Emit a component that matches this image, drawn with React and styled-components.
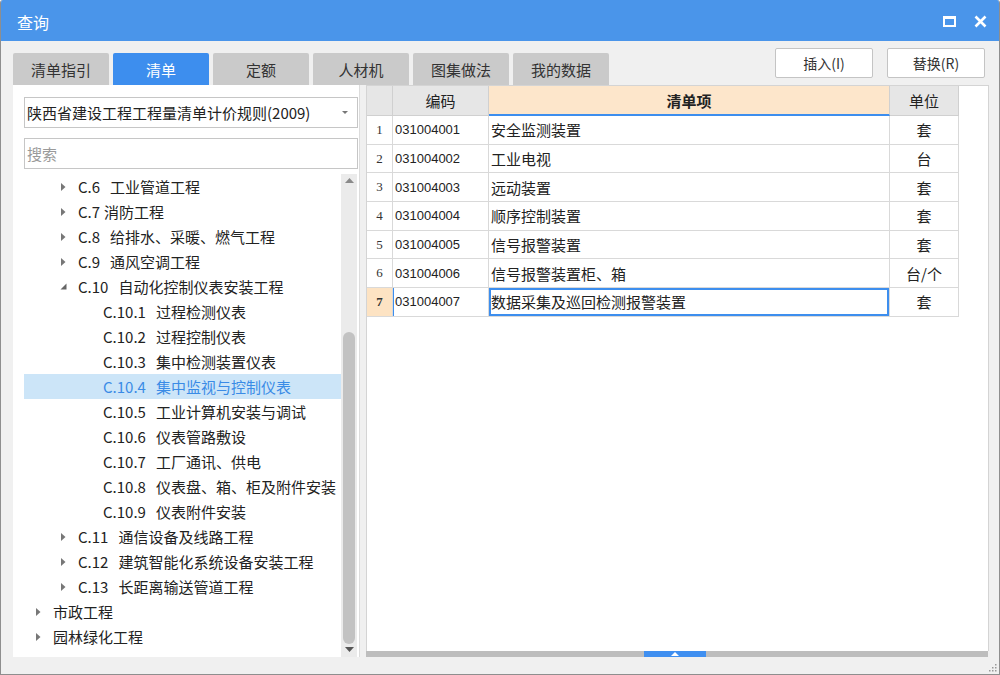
import React from "react";
import styled, { createGlobalStyle } from "styled-components";

const FONT = '"Noto Sans CJK SC", "Noto Sans", "Liberation Sans", sans-serif';
const BLUE = "#3d8eee";
const GRID = "#d9d9d9";

const GlobalStyle = createGlobalStyle`
  html, body {
    margin: 0;
    padding: 0;
    background: #ffffff;
  }
  body {
    font-family: ${FONT};
  }
  * {
    box-sizing: border-box;
  }
`;

const TABS = ["清单指引", "清单", "定额", "人材机", "图集做法", "我的数据"];

const TREE = [
  { level: 2, arrow: "right", code: "C.6", name: "工业管道工程" },
  { level: 2, arrow: "right", code: "C.7", name: "消防工程", tight: true },
  { level: 2, arrow: "right", code: "C.8", name: "给排水、采暖、燃气工程" },
  { level: 2, arrow: "right", code: "C.9", name: "通风空调工程" },
  { level: 2, arrow: "down", code: "C.10", name: "自动化控制仪表安装工程" },
  { level: 3, code: "C.10.1", name: "过程检测仪表" },
  { level: 3, code: "C.10.2", name: "过程控制仪表" },
  { level: 3, code: "C.10.3", name: "集中检测装置仪表" },
  { level: 3, code: "C.10.4", name: "集中监视与控制仪表", selected: true },
  { level: 3, code: "C.10.5", name: "工业计算机安装与调试" },
  { level: 3, code: "C.10.6", name: "仪表管路敷设" },
  { level: 3, code: "C.10.7", name: "工厂通讯、供电" },
  { level: 3, code: "C.10.8", name: "仪表盘、箱、柜及附件安装" },
  { level: 3, code: "C.10.9", name: "仪表附件安装" },
  { level: 2, arrow: "right", code: "C.11", name: "通信设备及线路工程" },
  { level: 2, arrow: "right", code: "C.12", name: "建筑智能化系统设备安装工程" },
  { level: 2, arrow: "right", code: "C.13", name: "长距离输送管道工程" },
  { level: 1, arrow: "right", name: "市政工程" },
  { level: 1, arrow: "right", name: "园林绿化工程" },
];

const ROWS = [
  ["031004001", "安全监测装置", "套"],
  ["031004002", "工业电视", "台"],
  ["031004003", "远动装置", "套"],
  ["031004004", "顺序控制装置", "套"],
  ["031004005", "信号报警装置", "套"],
  ["031004006", "信号报警装置柜、箱", "台/个"],
  ["031004007", "数据采集及巡回检测报警装置", "套"],
];

const App = () => {
  return (
    <>
      <GlobalStyle />
      <Window>
        <TitleBar>
          <Title>查询</Title>
          <WinControls>
            <svg width="13" height="11" viewBox="0 0 13 11">
              <rect x="1" y="1.5" width="11" height="8.5" fill="none" stroke="#fff" strokeWidth="2" />
              <rect x="0" y="0" width="13" height="3" fill="#fff" />
            </svg>
            <svg width="13" height="13" viewBox="0 0 13 13">
              <path d="M1.5 1.5 L11.5 11.5 M11.5 1.5 L1.5 11.5" stroke="#fff" strokeWidth="2.6" />
            </svg>
          </WinControls>
        </TitleBar>
        <Body>
          <TopRow>
            <Tabs>
              {TABS.map((t, i) => (
                <Tab key={t} $active={i === 1}>{t}</Tab>
              ))}
            </Tabs>
            <Actions>
              <ActionButton>插入(I)</ActionButton>
              <ActionButton>替换(R)</ActionButton>
            </Actions>
          </TopRow>
          <Main>
            <LeftPanel>
              <Combo>
                <span>陕西省建设工程工程量清单计价规则(2009)</span>
                <ComboArrow />
              </Combo>
              <Search>搜索</Search>
              <TreeArea>
                <TreeList>
                  {TREE.map((n, i) => (
                    <TreeRow key={i} $level={n.level} $selected={n.selected}>
                      {n.arrow === "right" && (
                        <ArrowBox>
                          <svg width="5" height="8" viewBox="0 0 5 8">
                            <path d="M0 0 L4.5 4 L0 8 Z" fill="#777" />
                          </svg>
                        </ArrowBox>
                      )}
                      {n.arrow === "down" && (
                        <ArrowBox>
                          <svg width="7" height="7" viewBox="0 0 7 7">
                            <path d="M6.5 0.5 L6.5 6.5 L0.5 6.5 Z" fill="#666" />
                          </svg>
                        </ArrowBox>
                      )}
                      {n.code && <Code $tight={n.tight}>{n.code}</Code>}
                      <span>{n.name}</span>
                    </TreeRow>
                  ))}
                </TreeList>
                <VScroll>
                  <svg width="9" height="5" viewBox="0 0 9 5">
                    <path d="M0 5 L4.5 0 L9 5 Z" fill="#8a8a8a" />
                  </svg>
                  <Thumb />
                  <svg width="9" height="5" viewBox="0 0 9 5">
                    <path d="M0 0 L4.5 5 L9 0 Z" fill="#555" />
                  </svg>
                </VScroll>
              </TreeArea>
            </LeftPanel>
            <RightColumn>
              <RightPanel>
                <Grid>
                  <HeadCell />
                  <HeadCell>编码</HeadCell>
                  <HeadCell $focus>清单项</HeadCell>
                  <HeadCell>单位</HeadCell>
                  {ROWS.map((r, i) => {
                    const sel = i === ROWS.length - 1;
                    return (
                      <React.Fragment key={r[0]}>
                        <NumCell $selected={sel}>{i + 1}</NumCell>
                        <CodeCell $selected={sel}>{r[0]}</CodeCell>
                        <NameCell $selected={sel}>{r[1]}</NameCell>
                        <UnitCell>{r[2]}</UnitCell>
                      </React.Fragment>
                    );
                  })}
                </Grid>
              </RightPanel>
              <Splitter>
                <SplitHandle>
                  <svg width="8" height="4" viewBox="0 0 8 4">
                    <path d="M0 4 L4 0 L8 4 Z" fill="#fff" />
                  </svg>
                </SplitHandle>
              </Splitter>
            </RightColumn>
          </Main>
        </Body>
        <Grip>
          <svg width="9" height="9" viewBox="0 0 9 9">
            <rect x="7" y="1" width="1.5" height="1.5" fill="#999" />
            <rect x="4" y="4" width="1.5" height="1.5" fill="#999" />
            <rect x="7" y="4" width="1.5" height="1.5" fill="#999" />
            <rect x="1" y="7" width="1.5" height="1.5" fill="#999" />
            <rect x="4" y="7" width="1.5" height="1.5" fill="#999" />
            <rect x="7" y="7" width="1.5" height="1.5" fill="#999" />
          </svg>
        </Grip>
      </Window>
    </>
  );
};
export default App;

const Window = styled.div`
  position: relative;
  width: 1000px;
  height: 675px;
  display: flex;
  flex-direction: column;
  background: #f0f0f0;
  border: 1px solid #8e8e8e;
  border-top: none;
  border-radius: 3px 3px 0 0;
  overflow: hidden;
`;

const TitleBar = styled.div`
  height: 41px;
  flex: none;
  display: flex;
  align-items: center;
  justify-content: space-between;
  background: #4a95ea;
  padding: 0 12px 0 16px;
`;

const Title = styled.div`
  color: #fff;
  font-size: 16px;
  padding-top: 2px;
`;

const WinControls = styled.div`
  display: flex;
  align-items: center;
  gap: 18px;
  padding-top: 1px;
`;

const Body = styled.div`
  flex: 1;
  display: flex;
  flex-direction: column;
  padding: 8px 10px 17px 12px;
`;

const TopRow = styled.div`
  height: 36px;
  flex: none;
  display: flex;
  justify-content: space-between;
`;

const Tabs = styled.div`
  display: flex;
  align-items: flex-end;
  gap: 4px;
`;

const Tab = styled.div`
  width: 96px;
  height: 32px;
  display: flex;
  align-items: center;
  justify-content: center;
  border-radius: 2px 2px 0 0;
  font-size: 15px;
  background: ${(p) => (p.$active ? BLUE : "#cacaca")};
  color: ${(p) => (p.$active ? "#fff" : "#333")};
`;

const Actions = styled.div`
  display: flex;
  gap: 14px;
  margin-right: 4px;
  margin-top: -1px;
`;

const ActionButton = styled.button`
  width: 98px;
  height: 30px;
  background: #fff;
  border: 1px solid #c4c4c4;
  border-radius: 2px;
  font-family: ${FONT};
  font-size: 14px;
  color: #333;
  padding: 0;
`;

const Main = styled.div`
  flex: 1;
  display: flex;
  gap: 6px;
  min-height: 0;
`;

const LeftPanel = styled.div`
  width: 347px;
  flex: none;
  display: flex;
  flex-direction: column;
  background: #fff;
  border-right: 1px solid #dcdcdc;
  padding: 12px 2px 0 11px;
`;

const Combo = styled.div`
  height: 31px;
  display: flex;
  align-items: center;
  justify-content: space-between;
  border: 1px solid #c6c6c6;
  padding: 0 9px 0 2px;
  font-size: 15px;
  color: #222;
  width: 334px;
`;

const ComboArrow = styled.div`
  width: 0;
  height: 0;
  border-left: 3px solid transparent;
  border-right: 3px solid transparent;
  border-top: 3px solid #777;
`;

const Search = styled.div`
  height: 31px;
  margin-top: 10px;
  display: flex;
  align-items: center;
  border: 1px solid #c6c6c6;
  padding-left: 2px;
  font-size: 15px;
  color: #9a9a9a;
  width: 334px;
`;

const TreeArea = styled.div`
  flex: 1;
  display: flex;
  margin-top: 5px;
  min-height: 0;
`;

const TreeList = styled.div`
  width: 317px;
  display: flex;
  flex-direction: column;
`;

const TreeRow = styled.div`
  position: relative;
  height: 25px;
  flex: none;
  display: flex;
  align-items: center;
  padding-left: ${(p) => (p.$level - 1) * 25 + 29}px;
  font-size: 15px;
  white-space: nowrap;
  color: ${(p) => (p.$selected ? "#3a8be6" : "#222")};
  background: ${(p) => (p.$selected ? "#cce5f8" : "transparent")};
`;

const ArrowBox = styled.span`
  width: 10px;
  margin-left: -20px;
  margin-right: 10px;
  display: flex;
  align-items: center;
  justify-content: center;
`;

const Code = styled.span`
  margin-right: ${(p) => (p.$tight ? 4 : 10)}px;
`;

const VScroll = styled.div`
  width: 16px;
  display: flex;
  flex-direction: column;
  align-items: center;
  background: #ebebeb;
  padding: 4px 0 5px;
`;

const Thumb = styled.div`
  width: 12px;
  margin-top: auto;
  margin-bottom: 3px;
  height: 312px;
  background: #c2c2c2;
  border-radius: 6px;
`;

const RightColumn = styled.div`
  flex: 1;
  display: flex;
  flex-direction: column;
`;

const RightPanel = styled.div`
  flex: 1;
  background: #fff;
  border: 1px solid #d4d4d4;
  border-bottom: none;
`;

const Grid = styled.div`
  display: grid;
  grid-template-columns: 26px 96px 401px 69px;
  grid-template-rows: 30px repeat(7, 28.7px);
`;

const Cell = styled.div`
  display: flex;
  align-items: center;
  border-right: 1px solid ${GRID};
  border-bottom: 1px solid ${GRID};
  white-space: nowrap;
  overflow: hidden;
`;

const HeadCell = styled(Cell)`
  justify-content: center;
  font-size: 15px;
  color: #222;
  background: ${(p) => (p.$focus ? "#fde6cb" : "#e6e6e6")};
  font-weight: ${(p) => (p.$focus ? 700 : 400)};
  border-color: #d0d0d0;
  border-bottom: ${(p) => (p.$focus ? `2px solid ${BLUE}` : "1px solid #d0d0d0")};
`;

const NumCell = styled(Cell)`
  justify-content: center;
  font-family: "Liberation Serif", "DejaVu Serif", serif;
  font-size: 13px;
  color: #333;
  font-weight: ${(p) => (p.$selected ? 700 : 400)};
  background: ${(p) => (p.$selected ? "#fde3c3" : "#fff")};
`;

const CodeCell = styled(Cell)`
  padding-left: 2px;
  font-family: "Liberation Sans", Arial, sans-serif;
  font-size: 13px;
  color: #222;
  box-shadow: ${(p) => (p.$selected ? `inset 1px 0 0 ${BLUE}` : "none")};
`;

const NameCell = styled(Cell)`
  padding-left: 2px;
  font-size: 15px;
  color: #222;
  box-shadow: ${(p) => (p.$selected ? `inset 0 0 0 2px ${BLUE}` : "none")};
`;

const UnitCell = styled(Cell)`
  justify-content: center;
  font-size: 15px;
  color: #222;
`;

const Splitter = styled.div`
  height: 6px;
  flex: none;
  background: #bdbdbd;
  display: flex;
  justify-content: center;
  margin-right: 1px;
`;

const SplitHandle = styled.div`
  width: 62px;
  margin-left: -5px;
  background: #3f8ff0;
  display: flex;
  align-items: center;
  justify-content: center;
`;

const Grip = styled.div`
  position: absolute;
  right: 2px;
  bottom: 2px;
  display: flex;
`;
